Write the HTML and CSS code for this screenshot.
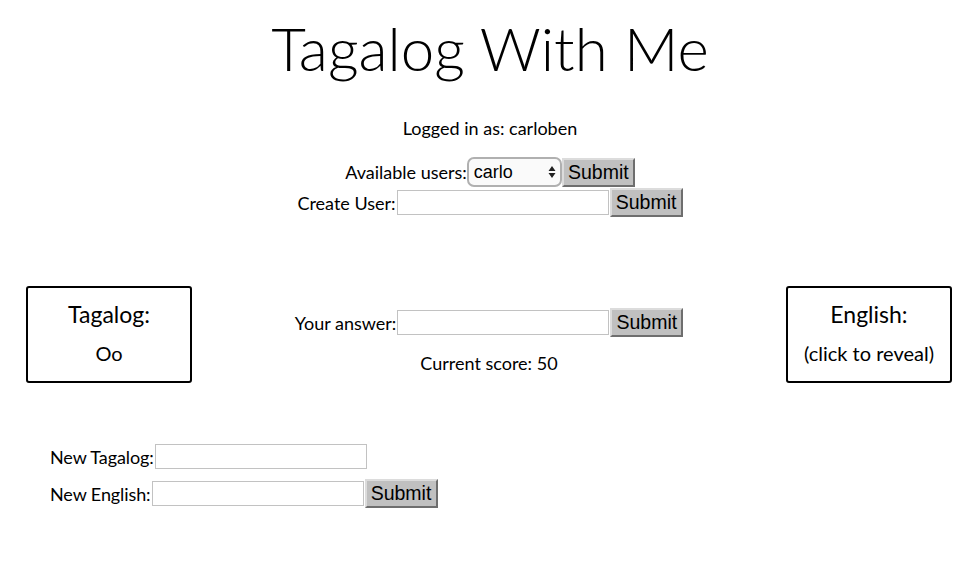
FILE: index.html
```html
<!DOCTYPE html>
<html>
<head>
<meta charset="utf-8">
<link rel="stylesheet" href="styles.css">
</head>
<body>
<h1 class="title">Tagalog With Me</h1>
<p class="logged">Logged in as: carloben</p>
<div class="users">
  <form class="row">
    <label>Available users:</label><span class="select"><span>carlo</span><svg width="8" height="14" viewBox="0 0 8 14"><path d="M4 1 L7.5 6 H0.5 Z M4 13 L7.5 8 H0.5 Z" fill="#222"/></svg></span><button type="button" class="btn">Submit</button>
  </form>
  <form class="row">
    <label>Create User:</label><input class="field" type="text"><button type="button" class="btn">Submit</button>
  </form>
</div>
<div class="quiz">
  <div class="card">
    <div class="card-head">Tagalog:</div>
    <div class="card-body">Oo</div>
  </div>
  <div class="answer">
    <form class="row">
      <label>Your answer:</label><input class="field" type="text"><button type="button" class="btn">Submit</button>
    </form>
    <p class="score">Current score: 50</p>
  </div>
  <div class="card">
    <div class="card-head">English:</div>
    <div class="card-body">(click to reveal)</div>
  </div>
</div>
<form class="add">
  <div class="add-row"><label>New Tagalog:</label><input class="field" type="text"></div>
  <div class="add-row"><label>New English:</label><input class="field" type="text"><button type="button" class="btn">Submit</button></div>
</form>
</body>
</html>
```
FILE: styles.css
```css
html, body {
  margin: 0;
  padding: 0;
  background: #fff;
  color: #000;
  font-family: "Lato", "Liberation Sans", sans-serif;
  font-size: 18px;
}
.title {
  margin: 0;
  padding-top: 12px;
  font-family: "Lato", sans-serif;
  font-weight: 300;
  font-size: 60px;
  line-height: 72px;
  text-align: center;
}
.logged {
  margin: 34px 0 0;
  line-height: 20px;
  text-align: center;
}
.users {
  margin-top: 19px;
  display: flex;
  flex-direction: column;
  align-items: center;
  gap: 1px;
}
.row {
  display: flex;
  align-items: center;
  margin: 0;
}
.row label, .add-row label {
  line-height: 20px;
}
.add-row label {
  letter-spacing: -0.1px;
}
.select {
  box-sizing: border-box;
  width: 95px;
  height: 30px;
  border: 2px solid #b0b0b0;
  border-radius: 7px;
  background: #fafafa;
  display: flex;
  align-items: center;
  justify-content: space-between;
  padding: 0 4px 0 5px;
  font-family: "Liberation Sans", sans-serif;
  font-size: 18px;
}
.field {
  box-sizing: border-box;
  width: 212px;
  height: 25px;
  margin: 0 1px;
  border: 1px solid #c2c2c2;
  padding: 0 3px;
  background: #fff;
}
.btn {
  box-sizing: border-box;
  height: 29px;
  width: 73px;
  padding: 0;
  margin: 0;
  background: #c0c0c0;
  border: 2px solid;
  border-color: #dcdcdc #6e6e6e #6e6e6e #dcdcdc;
  font-family: "Liberation Sans", sans-serif;
  font-size: 19.5px;
  color: #000;
}
.quiz {
  margin-top: 69px;
  padding: 0 28px 0 26px;
  display: flex;
  justify-content: space-between;
  align-items: flex-start;
}
.card {
  box-sizing: border-box;
  width: 166px;
  height: 97px;
  border: 2px solid #000;
  border-radius: 3px;
  text-align: center;
  padding-top: 12px;
}
.card-head {
  font-size: 23px;
  line-height: 28px;
}
.card-body {
  margin-top: 13px;
  font-size: 20px;
  line-height: 24px;
}
.answer {
  margin-top: 22px;
  display: flex;
  flex-direction: column;
  align-items: center;
}
.score {
  margin: 16px 0 0;
  line-height: 20px;
}
.add {
  margin-top: 61px;
  padding-left: 50px;
  display: flex;
  flex-direction: column;
  gap: 10px;
}
.add-row {
  display: flex;
  align-items: center;
}
```
